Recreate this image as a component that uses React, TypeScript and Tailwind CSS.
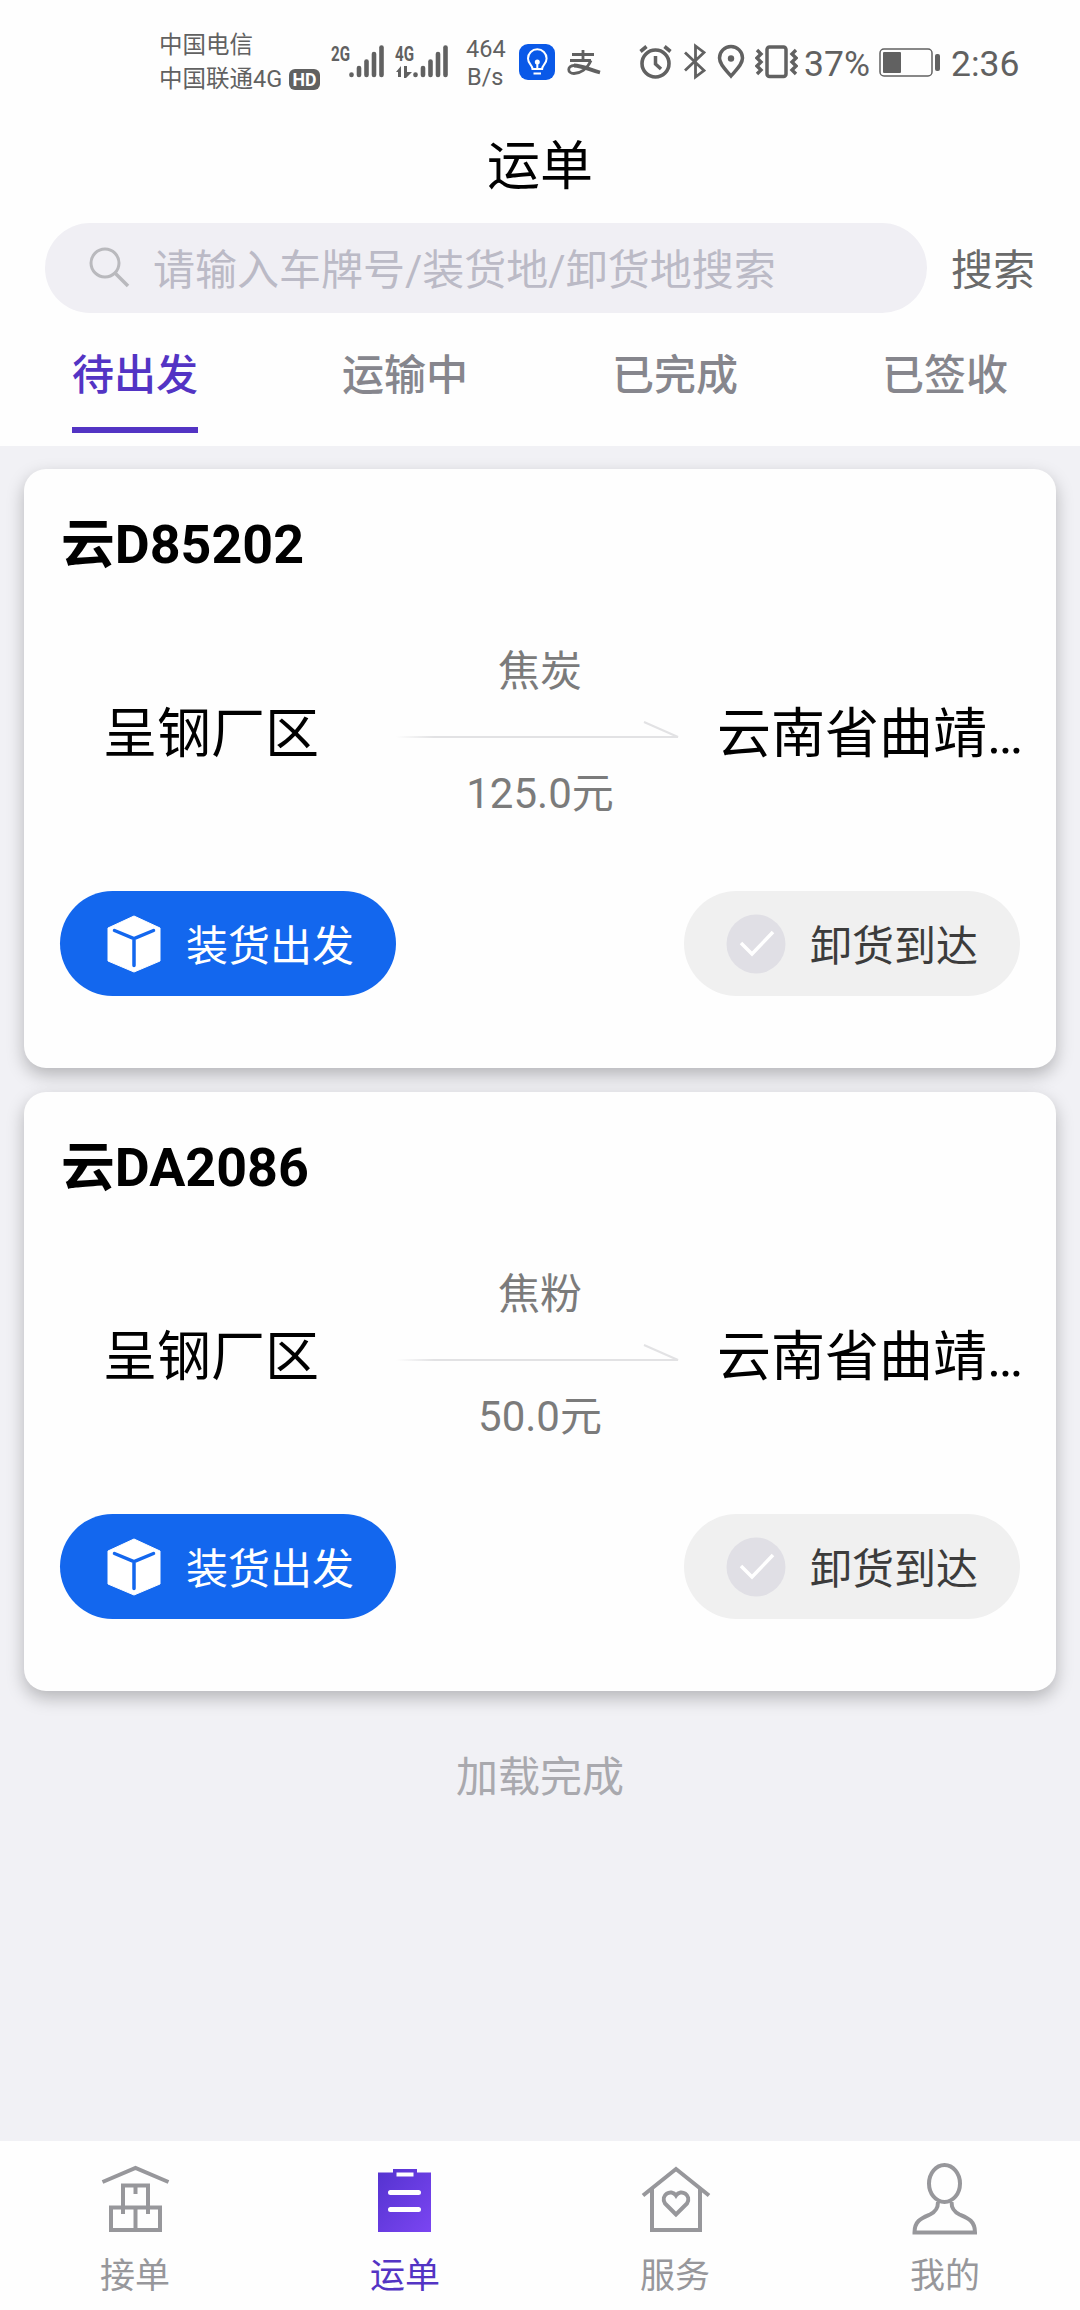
import { useId, useState } from "react"

interface Waybill {
  plate: string
  from: string
  to: string
  goods: string
  price: string
}

const waybills: Waybill[] = [
  { plate: "云D85202", from: "呈钢厂区", to: "云南省曲靖…", goods: "焦炭", price: "125.0元" },
  { plate: "云DA2086", from: "呈钢厂区", to: "云南省曲靖…", goods: "焦粉", price: "50.0元" },
]

const tabs = ["待出发", "运输中", "已完成", "已签收"]

function Signal({ label, data }: { label: string; data?: boolean }) {
  return (
    <svg className="overflow-visible" width="54" height="42" viewBox="0 -6 54 42" fill="#616161">
      <text x="0" y="17" fontSize="21" fontWeight="700" textLength="19" lengthAdjust="spacingAndGlyphs">
        {label}
      </text>
      {data && (
        <g>
          <path d="M1 28l5-6v11h-3v-5z" />
          <path d="M9 22h3v6h5l-6 6h-2z" />
        </g>
      )}
      <g stroke="#616161" strokeWidth="4.6" strokeLinecap="round">
        <path d="M20.5 30.5v.5" />
        <path d="M28 24v7" />
        <path d="M35.5 17.5v13.5" />
        <path d="M43 10v21" />
        <path d="M50.5 3.5v27.5" />
      </g>
    </svg>
  )
}

function StatusBar() {
  return (
    <div className="flex h-[124px] items-start pl-[159px] text-[#616161]">
      <div className="w-[162px] pt-[28px] text-[23.5px] leading-[34px]">
        <p>中国电信</p>
        <div className="flex items-center">
          <span className="whitespace-nowrap">中国联通4G</span>
          <svg className="ml-[7px] shrink-0" width="31" height="21" viewBox="0 0 31 21">
            <rect width="31" height="21" rx="6" fill="#616161" />
            <text x="3.5" y="17" fontSize="18" fontWeight="700" fill="#fff" textLength="24" lengthAdjust="spacingAndGlyphs">
              HD
            </text>
          </svg>
        </div>
      </div>
      <div className="ml-[10px] flex gap-[10px] pt-[38px]">
        <Signal label="2G" />
        <Signal label="4G" data />
      </div>
      <div className="ml-[17px] w-[42px] pt-[35px] text-[23.5px] leading-[28px]">
        <p>464</p>
        <p className="pl-px">B/s</p>
      </div>
      <svg className="ml-[11px] mt-[44px]" width="36" height="36" viewBox="0 0 36 36" fill="none" stroke="#fff" strokeWidth="2">
        <rect width="36" height="36" rx="9" fill="#0a59e8" stroke="none" />
        <path d="M13.5 25c0-4-4.5-5-4.5-10.5a9.3 9.3 0 0 1 18.6 0c0 5.5-4.5 6.5-4.5 10.5z" />
        <path d="M14.5 29.5h7.5M18.300 18v7" />
        <circle cx="18.3" cy="18" r="1.5" fill="#fff" />
      </svg>
      <svg className="ml-[12px] mt-[50px]" width="34" height="28" viewBox="0 0 34 28" fill="none" stroke="#616161" strokeWidth="2.8">
        <path d="M5 4.5h22M16 0v10M3 10.5h21" />
        <path d="M24 10.5c-4 9-11 13-17 13-7 0-7-8 0-8" />
        <path d="M7 15.5c7.5 0 15 4 26 7" strokeWidth="3.8" />
      </svg>
      <svg className="ml-[38px] mt-[44px]" width="34" height="35" viewBox="0 0 34 35" fill="none" stroke="#616161" strokeWidth="3.6">
        <circle cx="16.5" cy="19.5" r="13.5" />
        <path d="M16.5 12v8l5.5 5" strokeWidth="3.5" />
        <path d="M1.5 7.5l6-5M31.5 7.5l-6-5" />
      </svg>
      <svg className="ml-[11px] mt-[43px]" width="22" height="37" viewBox="0 0 22 37" fill="none" stroke="#616161" strokeWidth="2.8">
        <path d="M1 9.5l19 18-8.5 6.5V3l8.5 6.5-19 18" />
      </svg>
      <svg className="ml-[11px] mt-[44px]" width="28" height="36" viewBox="0 0 28 36" fill="none" stroke="#616161" strokeWidth="3.5">
        <path d="M14 32C9 26 2.5 20.5 2.5 14a11.5 11.5 0 0 1 23 0c0 6.5-6.5 12-11.5 18z" />
        <circle cx="14" cy="14.5" r="3.2" fill="#616161" stroke="none" />
      </svg>
      <svg className="ml-[10px] mt-[44px]" width="43" height="36" viewBox="0 0 43 36" fill="none" stroke="#616161" strokeWidth="3.5">
        <rect x="12" y="3" width="19" height="29.5" rx="2.5" />
        <path d="M2 6l4 4-4 4 4 4-4 4 4 4-4 4M41 6l-4 4 4 4-4 4 4 4-4 4 4 4" strokeWidth="3.4" />
      </svg>
      <span className="ml-[6px] mt-[43px] w-[65px] text-[35.5px] leading-[42px]">37%</span>
      <svg className="ml-[10px] mt-[48px]" width="62" height="30" viewBox="0 0 62 30" fill="#616161">
        <rect x="1" y="1" width="52" height="27" rx="4" fill="none" stroke="#616161" strokeWidth="1.5" />
        <rect x="4" y="4" width="18" height="21" rx="1" />
        <rect x="56" y="6" width="5" height="17" rx="2" />
      </svg>
      <span className="ml-[10px] mt-[43px] text-[35.5px] leading-[42px]">2:36</span>
    </div>
  )
}

function RouteArrow() {
  const id = useId()

  return (
    <svg className="h-[60px]" width="292" height="60" viewBox="0 0 292 60" fill="none" strokeWidth="2">
      <defs>
        <linearGradient id={id} gradientUnits="userSpaceOnUse" x1="2" y1="0" x2="40" y2="0">
          <stop offset="0" stopColor="#fefefe" />
          <stop offset="1" stopColor="#e2e2e4" />
        </linearGradient>
      </defs>
      <path d="M0 34h284l-34-15" stroke={`url(#${id})`} />
    </svg>
  )
}

function CubeIcon() {
  return (
    <svg width="54" height="58" viewBox="0 0 54 58">
      <path d="M27 1l26 12v33L27 57 1 46V13z" fill="#fff" stroke="#fff" strokeLinejoin="round" />
      <path d="M7.5 15.5l19.5 8 19.5-8M27 23.5v27" fill="none" stroke="#1367ee" strokeWidth="3.5" strokeLinecap="round" />
    </svg>
  )
}

function CheckIcon() {
  return (
    <svg width="60" height="60" viewBox="0 0 60 60">
      <circle cx="30" cy="30" r="29.5" fill="#e0dfe5" />
      <path d="M15 29l11 11 21-22" fill="none" stroke="#fff" strokeWidth="3.5" />
    </svg>
  )
}

function WaybillCard({ bill }: { bill: Waybill }) {
  return (
    <div className="h-[599px] rounded-[22px] bg-[#fefefe] px-9 pt-[46px] shadow-[0_7px_17px_rgba(0,0,0,0.25)]">
      <h2 className="pl-px text-[53.8px] font-bold leading-[60px] text-black">{bill.plate}</h2>
      <div className="mt-[63px] flex h-[190px] items-center">
        <p className="w-[303px] shrink-0 pl-[43px] pt-[3px] text-[54px] leading-[60px] text-black">{bill.from}</p>
        <div className="flex w-[354px] shrink-0 flex-col items-center text-[42px] leading-[62px] text-[#7b7b7b]">
          <p>{bill.goods}</p>
          <RouteArrow />
          <p>{bill.price}</p>
        </div>
        <p className="whitespace-nowrap pt-[3px] text-[54px] leading-[60px] text-black">{bill.to}</p>
      </div>
      <div className="mt-[63px] flex justify-between text-[42px]">
        <button className="flex h-[105px] w-[336px] items-center rounded-full bg-[#1367ee] pl-[47px] text-white">
          <CubeIcon />
          <span className="ml-[25px] whitespace-nowrap pt-[5px]">装货出发</span>
        </button>
        <button className="flex h-[105px] w-[336px] items-center rounded-full bg-[#f0f0f0] pl-[42px] text-[#3c3c3c]">
          <CheckIcon />
          <span className="ml-[24px] whitespace-nowrap pt-[5px]">卸货到达</span>
        </button>
      </div>
    </div>
  )
}

function WarehouseIcon() {
  return (
    <svg width="72" height="76" viewBox="0 0 72 76" fill="none" stroke="#97979b" strokeWidth="4">
      <path d="M3.5 21L36.5 7l33 14" />
      <path d="M24 53V24.500h25V53M36.500 25v8" />
      <path d="M12 46.500h49V69H12zM36.500 46.500V69" />
    </svg>
  )
}

function ClipboardIcon() {
  return (
    <svg width="72" height="76" viewBox="0 0 72 76">
      <defs>
        <linearGradient id="clip" x1="0" y1="0" x2="1" y2="1">
          <stop offset="0" stopColor="#5433cf" />
          <stop offset="1" stopColor="#7b45f2" />
        </linearGradient>
      </defs>
      <path d="M9 11.5h15V8h24v3.5h14V71H9z" fill="url(#clip)" />
      <path d="M27.5 11.5h17v4h-17z" fill="#fff" />
      <path d="M21.5 31.5h28M21.5 48.5h28" stroke="#fff" strokeWidth="5" strokeLinecap="round" />
    </svg>
  )
}

function HomeHeartIcon() {
  return (
    <svg width="72" height="76" viewBox="0 0 72 76" fill="none" stroke="#97979b" strokeWidth="4">
      <path d="M4 34.5L37 8l33 26.5" />
      <path d="M13 28v41h48V28" />
      <path d="M37 53.5L26 42.5c-5-8 6-15.5 11-8 5-7.5 16 0 11 8z" />
    </svg>
  )
}

function PersonIcon() {
  return (
    <svg width="72" height="76" viewBox="0 0 72 76" fill="none" stroke="#97979b" strokeWidth="4">
      <ellipse cx="35.5" cy="22.500" rx="15.5" ry="18.5" />
      <path d="M29 41c0 7-3 10-8 12.5-8 3.5-15.5 6-15.5 18h60.500c0-12-7.5-14.5-15.5-18-5-2.5-8-5.5-8-12.5" />
    </svg>
  )
}

const navItems = [
  { label: "接单", icon: WarehouseIcon },
  { label: "运单", icon: ClipboardIcon },
  { label: "服务", icon: HomeHeartIcon },
  { label: "我的", icon: PersonIcon },
]

export default function App() {
  const [activeTab, setActiveTab] = useState("待出发")
  const [activeNav, setActiveNav] = useState("运单")

  return (
    <div className="flex h-[2310px] w-[1080px] flex-col overflow-hidden bg-[#f1f1f5] font-[Roboto,'Noto_Sans_CJK_SC',sans-serif]">
      <header className="h-[446px] bg-[#fefefe]">
        <StatusBar />
        <h1 className="pt-[3px] text-center text-[53px] leading-[80px] text-black">运单</h1>
        <div className="mt-[16px] flex items-center pl-[45px] text-[42px]">
          <div className="flex h-[90px] w-[882px] items-center rounded-full bg-[#f0eff4] pl-[43px] text-[#bbbac6]">
            <svg width="42" height="42" viewBox="0 0 42 42" fill="none" stroke="#b9b9bd" strokeWidth="3">
              <circle cx="17" cy="16" r="14" />
              <path d="M27 26l13 13" strokeWidth="3.5" />
            </svg>
            <span className="ml-[23px] whitespace-nowrap pt-1">请输入车牌号/装货地/卸货地搜索</span>
          </div>
          <button className="ml-[24px] whitespace-nowrap pt-1 text-[#6a6a6a]">搜索</button>
        </div>
        <div className="mt-[32px] grid grid-cols-4 text-[42px] font-medium">
          {tabs.map((tab) => (
            <button key={tab} onClick={() => setActiveTab(tab)} className="flex flex-col items-center">
              <span className={`leading-[62px] ${activeTab === tab ? "text-[#5334c4]" : "text-[#86868d]"}`}>{tab}</span>
              <span className={`mt-[20px] h-[6px] w-[126px] ${activeTab === tab ? "bg-[#5334c4]" : ""}`} />
            </button>
          ))}
        </div>
      </header>

      <main className="flex flex-1 flex-col gap-6 px-6 pt-[23px]">
        {waybills.map((bill) => (
          <WaybillCard key={bill.plate} bill={bill} />
        ))}
        <p className="mt-[33px] text-center text-[42px] leading-[60px] text-[#a9a9ae]">加载完成</p>
      </main>

      <nav className="grid h-[169px] grid-cols-4 bg-[#fefefe]">
        {navItems.map(({ label, icon: Icon }) => (
          <button key={label} onClick={() => setActiveNav(label)} className="flex flex-col items-center pt-[20px]">
            <Icon />
            <span className={`mt-[19px] text-[35px] leading-[42px] ${activeNav === label ? "text-[#5334c4]" : "text-[#97979b]"}`}>
              {label}
            </span>
          </button>
        ))}
      </nav>
    </div>
  )
}
